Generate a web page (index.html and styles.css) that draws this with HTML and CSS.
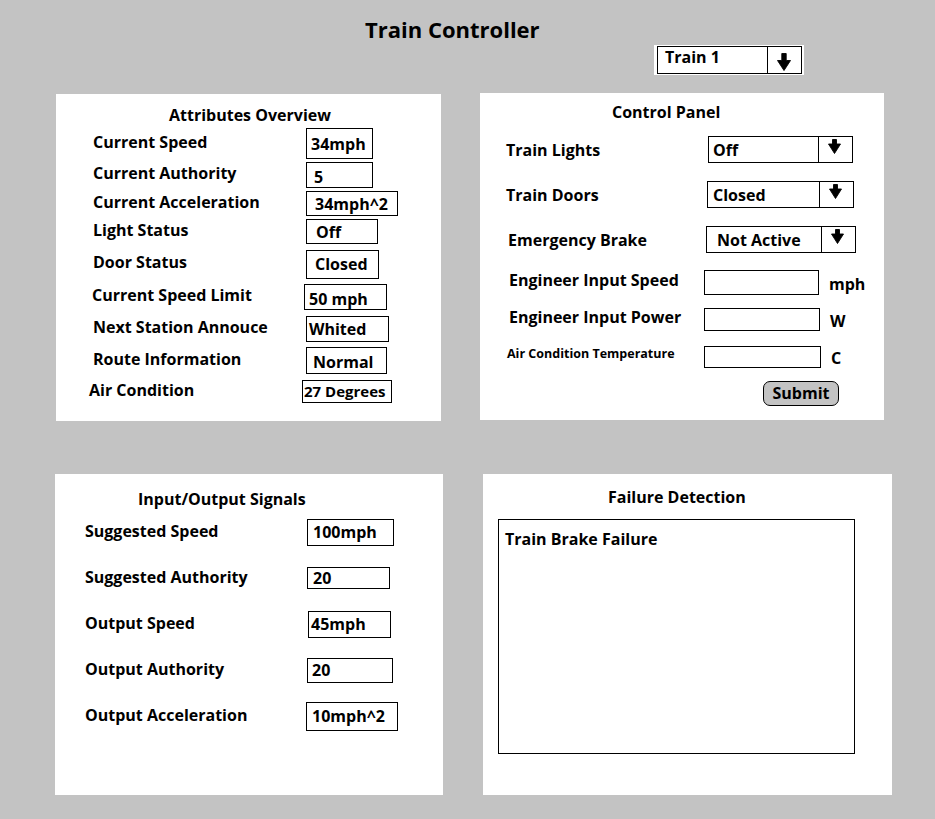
FILE: index.html
```html
<!DOCTYPE html>
<html lang="en">
<head>
<meta charset="utf-8">
<title>Train Controller</title>
<link rel="stylesheet" href="styles.css">
</head>
<body>
<header class="header">
  <h1 class="title">Train Controller</h1>
  <div class="train-pick">
    <div class="select select-train">
      <span class="select-text">Train 1</span>
      <span class="select-btn"><svg class="arrow arrow-lg" width="14" height="18" viewBox="-0.5 -0.5 14 18"><path d="M4.3 0H8.7V7H13L6.5 17L0 7H4.3Z"/></svg></span>
    </div>
  </div>
</header>
<main>
  <div class="panel-row top-row">
    <section class="panel attrs">
      <h2 class="panel-title">Attributes Overview</h2>
      <div class="rows attr-rows">
        <div class="row"><span class="label">Current Speed</span><span class="val v1">34mph</span></div>
        <div class="row"><span class="label">Current Authority</span><span class="val v2">5</span></div>
        <div class="row"><span class="label">Current Acceleration</span><span class="val v3">34mph^2</span></div>
        <div class="row"><span class="label">Light Status</span><span class="val v4">Off</span></div>
        <div class="row sp"><span class="label">Door Status</span><span class="val v5">Closed</span></div>
        <div class="row sp"><span class="label label-l1">Current Speed Limit</span><span class="val v6">50 mph</span></div>
        <div class="row sp"><span class="label">Next Station Annouce</span><span class="val v7">Whited</span></div>
        <div class="row sp"><span class="label">Route Information</span><span class="val v8">Normal</span></div>
        <div class="row sp"><span class="label label-out">Air Condition</span><span class="val v9">27 Degrees</span></div>
      </div>
    </section>
    <section class="panel control">
      <h2 class="panel-title">Control Panel</h2>
      <div class="rows ctl-rows">
        <div class="crow sel"><span class="label">Train Lights</span>
          <div class="select ctl s1"><span class="select-text">Off</span><span class="select-btn"><svg class="arrow arrow-sm" width="13" height="15" viewBox="-0.5 -0.5 13 15"><path d="M4 0H8V4.5H12L6 14L0 4.5H4Z"/></svg></span></div>
        </div>
        <div class="crow sel"><span class="label">Train Doors</span>
          <div class="select ctl s2"><span class="select-text">Closed</span><span class="select-btn"><svg class="arrow arrow-sm" width="13" height="15" viewBox="-0.5 -0.5 13 15"><path d="M4 0H8V4.5H12L6 14L0 4.5H4Z"/></svg></span></div>
        </div>
        <div class="crow sel"><span class="label label-r2">Emergency Brake</span>
          <div class="select ctl s3"><span class="select-text">Not Active</span><span class="select-btn"><svg class="arrow arrow-sm" width="13" height="15" viewBox="-0.5 -0.5 13 15"><path d="M4 0H8V4.5H12L6 14L0 4.5H4Z"/></svg></span></div>
        </div>
        <div class="crow in"><span class="label">Engineer Input Speed</span><span class="input i1"></span><span class="unit">mph</span></div>
        <div class="crow in"><span class="label">Engineer Input Power</span><span class="input i2"></span><span class="unit">W</span></div>
        <div class="crow in"><span class="label label-sm">Air Condition Temperature</span><span class="input i3"></span><span class="unit">C</span></div>
        <div class="submit-row"><button class="submit" type="button">Submit</button></div>
      </div>
    </section>
  </div>
  <div class="panel-row bottom-row">
    <section class="panel io">
      <h2 class="panel-title">Input/Output Signals</h2>
      <div class="rows io-rows">
        <div class="irow"><span class="label">Suggested Speed</span><span class="val o1">100mph</span></div>
        <div class="irow"><span class="label">Suggested Authority</span><span class="val o2">20</span></div>
        <div class="irow"><span class="label">Output Speed</span><span class="val o3">45mph</span></div>
        <div class="irow"><span class="label">Output Authority</span><span class="val o4">20</span></div>
        <div class="irow"><span class="label">Output Acceleration</span><span class="val o5">10mph^2</span></div>
      </div>
    </section>
    <section class="panel fail">
      <h2 class="panel-title">Failure Detection</h2>
      <div class="fail-box">Train Brake Failure</div>
    </section>
  </div>
</main>
</body>
</html>
```
FILE: styles.css
```css
* { box-sizing: border-box; }
html, body { margin: 0; padding: 0; }
body {
  background: #c3c3c3;
  font-family: "Open Sans", "Noto Sans", sans-serif;
  font-weight: 700;
  font-size: 16px;
  line-height: 20px;
  color: #000;
  width: 935px;
  height: 819px;
  overflow: hidden;
}

/* header */
.header { padding-top: 15px; }
.title { margin: 0; padding-left: 365px; font-size: 22px; line-height: 28px; font-weight: 700; }
.train-pick { margin: 2px 0 0 654px; width: 150px; height: 30px; background: #fff; padding: 1px 2px 1px 3px; }

/* select boxes */
.select { display: flex; border: 1px solid #000; background: #fff; }
.select-train { height: 28px; }
.select-train .select-text { padding: 0 0 6px 7px; }
.select-text { flex: 1; display: flex; align-items: center; white-space: nowrap; }
.select-btn { flex: 0 0 34px; border-left: 1px solid #000; display: flex; align-items: center; justify-content: center; }
.arrow { display: block; flex-shrink: 0; fill: #000; stroke: #000; stroke-width: 0.9; stroke-linejoin: miter; }
.arrow-lg { width: 14px; height: 18px; margin: 4px 2px 0 0; }
.arrow-sm { width: 13px; height: 15px; margin: 0 3px 6px 0; }

/* panels */
.panel-row { display: flex; align-items: flex-start; }
.top-row { margin-top: 18px; }
.bottom-row { margin-top: 53px; }
.panel { background: #fff; }
.panel-title { margin: 0; font-size: 16px; line-height: 20px; font-weight: 700; white-space: nowrap; }

.label { white-space: nowrap; }
.val { border: 1px solid #000; display: flex; align-items: center; white-space: nowrap; }

/* attributes overview */
.attrs { margin: 1px 0 0 56px; width: 385px; height: 327px; padding-top: 11px; }
.attrs .panel-title { padding-left: 113px; }
.attr-rows { margin-top: 3px; padding-left: 37px; }
.row { display: flex; align-items: center; }
.row + .row { margin-top: 3px; }
.row.sp { margin-top: 5.6px; }
.row .label { flex: 0 0 213px; margin-bottom: 4px; }
.row .label-out { margin-left: -4px; }
.row .label-l1 { margin-left: -1px; flex-basis: 212px; }
.v1 { width: 67px; height: 31px; padding-left: 4px; }
.v2 { width: 67px; height: 26px; padding-left: 7px; padding-top: 4px; }
.v3 { width: 92px; height: 25px; padding-left: 8px; }
.v4 { width: 72px; height: 25px; padding-left: 9px; }
.v5 { width: 73px; height: 29px; padding-left: 8px; }
.v6 { width: 83px; height: 26px; padding-left: 4px; padding-top: 3px; }
.v7 { width: 83px; height: 26px; padding-left: 2px; }
.v8 { width: 81px; height: 27px; padding-left: 6px; padding-top: 3px; }
.v9 { width: 90px; height: 23px; padding-left: 1px; font-size: 15px; padding-bottom: 2px; }

/* control panel */
.control { margin-left: 39px; width: 404px; height: 327px; padding-top: 9px; }
.control .panel-title { padding-left: 132px; }
.ctl-rows { margin-top: 5px; padding-left: 26px; }
.crow { display: flex; align-items: center; height: 45px; }
.crow .label { flex: 0 0 200px; }
.crow .label-r2 { margin-left: 2px; flex-basis: 198px; }
.crow.in { height: 37px; }
.crow.sel + .crow.in { margin-top: 2px; }
.crow.in .label { margin: 0 0 6px 3px; flex-basis: 197px; }
.crow.in .label-sm { margin-left: 1px; flex-basis: 199px; font-size: 12.5px; }
.ctl { height: 27px; }
.s1 { width: 145px; margin-left: 2px; }
.s1 .select-text { padding-left: 4px; }
.s2 { width: 147px; margin-left: 1px; }
.s2 .select-text { padding-left: 5px; }
.s3 { width: 150px; }
.s3 .select-text { padding-left: 10px; }
.input { border: 1px solid #000; background: #fff; }
.i1 { width: 115px; height: 25px; margin-left: -2px; }
.i2 { width: 116px; height: 23px; margin-left: -2px; }
.i3 { width: 117px; height: 22px; margin-left: -2px; }
.unit { margin-left: 10px; padding-top: 2px; }
.submit-row { margin-top: 6px; padding-left: 257px; }
.submit {
  display: block;
  width: 76px;
  height: 25px;
  border: 1px solid #000;
  border-radius: 7px;
  background: #c3c3c3;
  font: inherit;
  color: #000;
  padding: 0 0 2px 0;
  text-align: center;
}

/* input/output signals */
.io { margin-left: 55px; width: 388px; height: 321px; padding-top: 15px; }
.io .panel-title { padding-left: 83px; }
.io-rows { padding-left: 30px; }
.irow { display: flex; align-items: center; height: 46px; }
.irow .label { flex: 0 0 222px; margin-bottom: 2px; }
.o1 { width: 87px; height: 27px; padding-left: 5px; }
.o2 { width: 83px; height: 22px; padding-left: 5px; }
.o3 { width: 83px; height: 27px; padding-left: 2px; margin-left: 1px; }
.o4 { width: 86px; height: 25px; padding-left: 4px; }
.o5 { width: 92px; height: 29px; padding-left: 5px; margin-left: -1px; }

/* failure detection */
.fail { margin-left: 40px; width: 409px; height: 321px; padding-top: 13px; }
.fail .panel-title { padding-left: 125px; }
.fail-box {
  margin: 12px 0 0 15px;
  width: 357px;
  height: 235px;
  border: 1px solid #000;
  padding: 9px 0 0 6px;
}
```
